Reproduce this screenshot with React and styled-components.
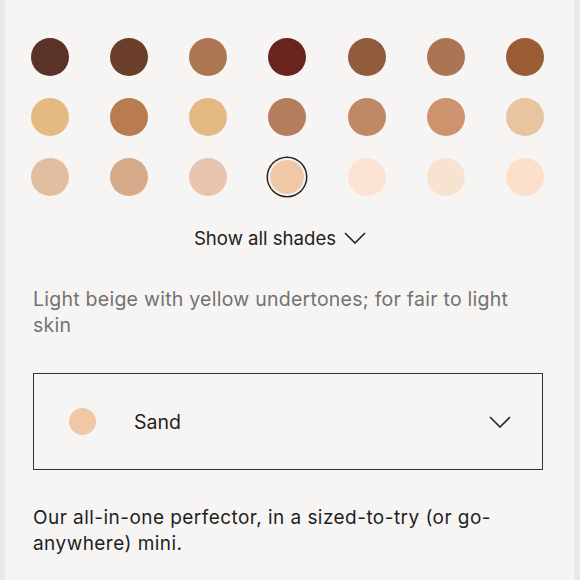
import React, { useState } from 'react';
import styled, { createGlobalStyle } from 'styled-components';

const GlobalStyle = createGlobalStyle`
  html, body {
    margin: 0;
    padding: 0;
    background: #ebe9e7;
  }
  body {
    font-family: Inter, "Noto Sans", sans-serif;
    -webkit-font-smoothing: antialiased;
  }
`;

const shades = [
    ['#5a3228', '#6b3e2a', '#ad7550', '#6a2420', '#915c3c', '#ab7553', '#995c34'],
    ['#e4ba80', '#b87c50', '#e4b882', '#b47d5c', '#bf8966', '#cd936c', '#e8c49f'],
    ['#e2bea0', '#d6aa88', '#e8c4ae', '#f0c8a8', '#fde3d4', '#f8e3d0', '#fde0cc'],
].flat();

const Chevron = ({ width = 22, height = 12 }) => (
    <svg width={width} height={height} viewBox="0 0 22 12" fill="none">
        <path d="M1 1 L11 11 L21 1" stroke="#222" strokeWidth="1.6" strokeLinejoin="miter" />
    </svg>
);

const App = () => {
    const [selected, setSelected] = useState(17);

    return (
        <Page>
            <GlobalStyle />
            <SwatchGrid>
                {shades.map((color, index) => (
                    <SwatchCell key={index} onClick={() => setSelected(index)}>
                        <Swatch color={color} $active={selected === index} />
                    </SwatchCell>
                ))}
            </SwatchGrid>

            <ShowAllRow>
                <ShowAllButton>
                    Show all shades
                    <Chevron />
                </ShowAllButton>
            </ShowAllRow>

            <Description>Light beige with yellow undertones; for fair to light skin</Description>

            <ShadeSelect>
                <SelectSwatch color={shades[selected]} />
                <SelectLabel>Sand</SelectLabel>
                <Chevron />
            </ShadeSelect>

            <Blurb>Our all-in-one perfector, in a sized-to-try (or go-anywhere) mini.</Blurb>
        </Page>
    );
};

const Page = styled.div`
  box-sizing: border-box;
  margin: 0 6px 0 5px;
  min-height: 580px;
  background: #f7f5f3;
  padding: 38px 31px 0 28px;
`;

const SwatchGrid = styled.div`
  display: grid;
  grid-template-columns: repeat(7, 38px);
  justify-content: space-between;
  row-gap: 22px;
  margin: 0 -1px 0 -2px;
`;

const SwatchCell = styled.div`
  width: 38px;
  height: 38px;
  display: flex;
  align-items: center;
  justify-content: center;
  cursor: pointer;
`;

const Swatch = styled.div`
  width: ${(p) => (p.$active ? '34px' : '38px')};
  height: ${(p) => (p.$active ? '34px' : '38px')};
  border-radius: 50%;
  background: ${(p) => p.color};
  box-shadow: ${(p) => (p.$active ? '0 0 0 2px #f7f5f3, 0 0 0 3.5px #222' : 'none')};
`;

const ShowAllRow = styled.div`
  display: flex;
  justify-content: center;
  margin-top: 30px;
  padding-right: 16px;
`;

const ShowAllButton = styled.button`
  display: flex;
  align-items: center;
  gap: 8px;
  padding: 0;
  background: none;
  border: none;
  font-family: Inter, "Noto Sans", sans-serif;
  font-size: 18.6px;
  line-height: 24px;
  color: #222;
  cursor: pointer;
`;

const Description = styled.p`
  margin: 36px 0 0;
  font-size: 19.5px;
  letter-spacing: 0.25px;
  line-height: 26px;
  color: #727272;
`;

const ShadeSelect = styled.div`
  box-sizing: border-box;
  display: flex;
  align-items: center;
  height: 97px;
  margin: 35px 0 0;
  padding: 0 31px 0 35px;
  border: 1.5px solid #333;
`;

const SelectSwatch = styled.div`
  width: 27px;
  height: 27px;
  border-radius: 50%;
  background: ${(p) => p.color};
`;

const SelectLabel = styled.span`
  flex: 1;
  margin-left: 38px;
  font-size: 19.5px;
  color: #222;
`;

const Blurb = styled.p`
  margin: 35px 0 0;
  font-size: 19px;
  letter-spacing: 0.45px;
  line-height: 26px;
  color: #1e1e1e;
`;

export default App;
